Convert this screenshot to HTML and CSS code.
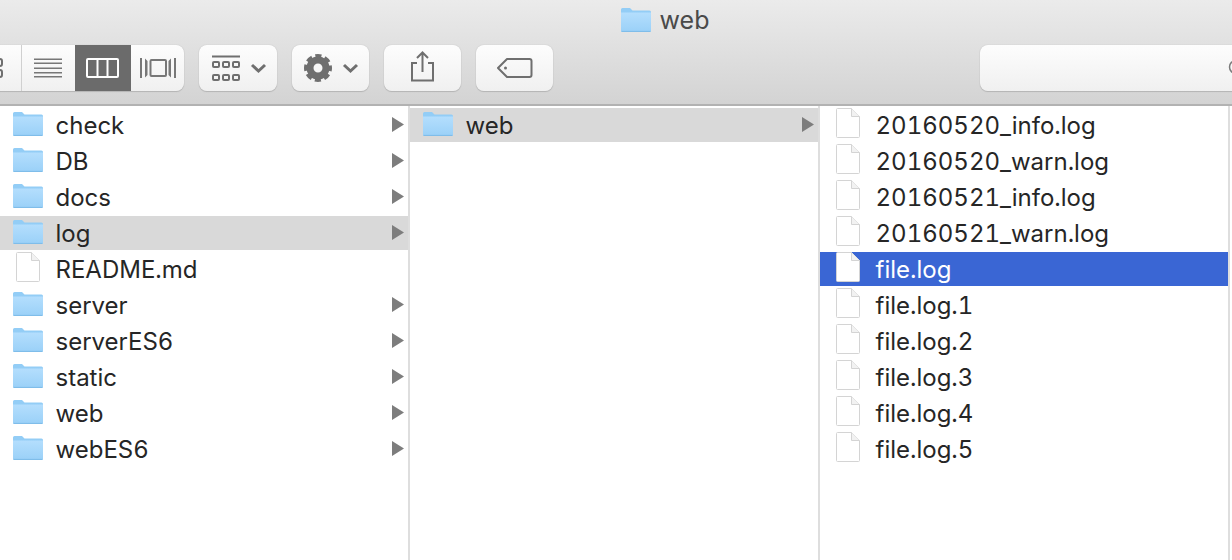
FILE: index.html
```html
<html>

<head>
  <title>web</title>
  <link rel="stylesheet" href="styles.css">
</head>

<body>
  <!-- Shared icons -->
  <svg class="sprite">
    <defs>
      <linearGradient id="folderFront" x1="0" y1="0" x2="0" y2="1">
        <stop offset="0" stop-color="#b4defd"/>
        <stop offset="1" stop-color="#9bd1f8"/>
      </linearGradient>
    </defs>
    <symbol id="folder" viewBox="0 0 30 24">
      <path d="M0 1.500Q0 0 1.500 0H9L11.500 2.500H28.500Q30 2.500 30 4V22.500Q30 24 28.500 24H1.500Q0 24 0 22.500Z" fill="#93cdf6"/>
      <path d="M0 4.500H30V22.500Q30 23.200 28.500 23.200H1.500Q0 23.200 0 22.500Z" fill="url(#folderFront)"/>
      <path d="M.5 23.400H29.500" stroke="#7dbbe8" stroke-width="1"/>
    </symbol>
    <symbol id="file" viewBox="0 0 24 30">
      <path d="M.5 1.500Q.5 .5 1.500 .5H15.500L23.500 8.500V28.500Q23.500 29.500 22.500 29.500H1.500Q.5 29.500 .5 28.500Z" fill="#fff" stroke="#d4d4d4"/>
      <path d="M15.500 .5V8.500H23.500" fill="#f2f2f2" stroke="#d4d4d4"/>
    </symbol>
    <symbol id="arrow" viewBox="0 0 12 15">
      <path d="M0 0L12 7.500L0 15Z" fill="#7d7d7d"/>
    </symbol>
  </svg>

  <!-- Title bar and toolbar -->
  <div class="toolbar">
    <div class="title">
      <svg class="folder"><use href="#folder"/></svg>
      <span>web</span>
    </div>
    <div class="tools">
      <div class="group">
        <div class="btn view first">
          <svg width="51" height="46" viewBox="0 0 51 46" fill="none" stroke="#6f6f6f" stroke-width="2">
            <rect x="25" y="14" width="7" height="7" rx="2"/>
            <rect x="25" y="25" width="7" height="7" rx="2"/>
          </svg>
        </div>
        <div class="btn view">
          <svg width="53" height="46" viewBox="0 0 53 46" fill="#777">
            <rect x="12" y="13.500" width="28" height="1.500"/>
            <rect x="12" y="17.500" width="28" height="1.500"/>
            <rect x="12" y="22.500" width="28" height="1.500"/>
            <rect x="12" y="27" width="28" height="1.500"/>
            <rect x="12" y="31" width="28" height="1.500"/>
          </svg>
        </div>
        <div class="btn view active">
          <svg width="56" height="46" viewBox="0 0 56 46" fill="none" stroke="#fff" stroke-width="2">
            <rect x="12" y="14" width="31" height="18" rx="1"/>
            <path d="M22.500 14V32M32.500 14V32"/>
          </svg>
        </div>
        <div class="btn view">
          <svg width="53" height="46" viewBox="0 0 53 46" fill="none" stroke="#777" stroke-width="2">
            <rect x="19.500" y="15" width="15.500" height="16" rx="1"/>
            <path d="M10 13V33M44 13V33"/>
            <path d="M14 13.500V32.500L16.500 30V16ZM40 13.500V32.500L37.500 30V16Z" fill="#777" stroke="none"/>
          </svg>
        </div>
      </div>

      <div class="btn">
        <svg width="78" height="46" viewBox="0 0 78 46" fill="none" stroke="#6f6f6f" stroke-width="2">
          <path d="M13 11.500H41"/>
          <rect x="14" y="17" width="6" height="5" rx="1"/>
          <rect x="24" y="17" width="6" height="5" rx="1"/>
          <rect x="34" y="17" width="6" height="5" rx="1"/>
          <rect x="14" y="30" width="6" height="5" rx="1"/>
          <rect x="24" y="30" width="6" height="5" rx="1"/>
          <rect x="34" y="30" width="6" height="5" rx="1"/>
          <path d="M53 20L59.500 26L66 20" stroke-width="3"/>
        </svg>
      </div>

      <div class="btn">
        <svg width="77" height="46" viewBox="0 0 77 46" fill="none">
          <circle cx="26" cy="23" r="8" stroke="#6f6f6f" stroke-width="7"/>
          <circle cx="26" cy="23" r="12" stroke="#6f6f6f" stroke-width="4" stroke-dasharray="6 3.425" stroke-dashoffset="3"/>
          <path d="M52 20L58.500 26L65 20" stroke="#6f6f6f" stroke-width="3"/>
        </svg>
      </div>

      <div class="btn">
        <svg width="77" height="46" viewBox="0 0 77 46" fill="none" stroke="#6f6f6f" stroke-width="2">
          <path d="M33 18H28V35.500H49V18H44"/>
          <path d="M38.500 27V8M33 13L38.500 7.500L44 13"/>
        </svg>
      </div>

      <div class="btn">
        <svg width="77" height="46" viewBox="0 0 77 46" fill="none" stroke="#6f6f6f" stroke-width="2">
          <path d="M31 14H53.500Q55.500 14 55.500 16V30Q55.500 32 53.500 32H31L22 23Z" stroke-linejoin="round"/>
          <circle cx="29.500" cy="23" r="1.500" fill="#6f6f6f" stroke="none"/>
        </svg>
      </div>

      <div class="btn search">
        <svg width="20" height="24" viewBox="0 0 20 24" fill="none" stroke="#7a7a7a" stroke-width="1.500">
          <circle cx="8" cy="11" r="6.500"/>
        </svg>
      </div>
    </div>
  </div>

  <!-- Columns -->
  <div class="columns">
    <div class="col">
      <div class="row"><svg class="folder"><use href="#folder"/></svg><span class="name">check</span><svg class="arrow"><use href="#arrow"/></svg></div>
      <div class="row"><svg class="folder"><use href="#folder"/></svg><span class="name">DB</span><svg class="arrow"><use href="#arrow"/></svg></div>
      <div class="row"><svg class="folder"><use href="#folder"/></svg><span class="name">docs</span><svg class="arrow"><use href="#arrow"/></svg></div>
      <div class="row picked"><svg class="folder"><use href="#folder"/></svg><span class="name">log</span><svg class="arrow"><use href="#arrow"/></svg></div>
      <div class="row"><svg class="file"><use href="#file"/></svg><span class="name">README.md</span></div>
      <div class="row"><svg class="folder"><use href="#folder"/></svg><span class="name">server</span><svg class="arrow"><use href="#arrow"/></svg></div>
      <div class="row"><svg class="folder"><use href="#folder"/></svg><span class="name">serverES6</span><svg class="arrow"><use href="#arrow"/></svg></div>
      <div class="row"><svg class="folder"><use href="#folder"/></svg><span class="name">static</span><svg class="arrow"><use href="#arrow"/></svg></div>
      <div class="row"><svg class="folder"><use href="#folder"/></svg><span class="name">web</span><svg class="arrow"><use href="#arrow"/></svg></div>
      <div class="row"><svg class="folder"><use href="#folder"/></svg><span class="name">webES6</span><svg class="arrow"><use href="#arrow"/></svg></div>
    </div>

    <div class="col">
      <div class="row picked"><svg class="folder"><use href="#folder"/></svg><span class="name">web</span><svg class="arrow"><use href="#arrow"/></svg></div>
    </div>

    <div class="col files">
      <div class="row"><svg class="file"><use href="#file"/></svg><span class="name">20160520_info.log</span></div>
      <div class="row"><svg class="file"><use href="#file"/></svg><span class="name">20160520_warn.log</span></div>
      <div class="row"><svg class="file"><use href="#file"/></svg><span class="name">20160521_info.log</span></div>
      <div class="row"><svg class="file"><use href="#file"/></svg><span class="name">20160521_warn.log</span></div>
      <div class="row selected"><svg class="file"><use href="#file"/></svg><span class="name">file.log</span></div>
      <div class="row"><svg class="file"><use href="#file"/></svg><span class="name">file.log.1</span></div>
      <div class="row"><svg class="file"><use href="#file"/></svg><span class="name">file.log.2</span></div>
      <div class="row"><svg class="file"><use href="#file"/></svg><span class="name">file.log.3</span></div>
      <div class="row"><svg class="file"><use href="#file"/></svg><span class="name">file.log.4</span></div>
      <div class="row"><svg class="file"><use href="#file"/></svg><span class="name">file.log.5</span></div>
    </div>
  </div>
</body>

</html>
```

FILE: styles.css
```css
body {
  margin: 0;
  height: 560px;
  overflow: hidden;
  background-color: white;
  font-family: Inter, "Liberation Sans", Arial, sans-serif;
  font-variant-numeric: tabular-nums;
  color: #262626;
}

/* Not display: none, the folder gradient stops working then */
.sprite {
  display: block;
  width: 0;
  height: 0;
}

/* Title bar and toolbar */
.toolbar {
  height: 104px;
  overflow: hidden;
  background: linear-gradient(#ebebeb, #d3d3d3);
  border-bottom: 2px solid #b2b2b2;
}

.title {
  height: 45px;
  display: flex;
  justify-content: center;
  align-items: center;
  gap: 9px;
  padding-left: 98px;
  padding-bottom: 6px;
  box-sizing: border-box;
  font-size: 25px;
  color: #4a4a4a;
}

.tools {
  display: flex;
  gap: 15px;
  margin-left: -30px;
}

.group {
  display: flex;
  border-radius: 8px;
  overflow: hidden;
  box-shadow: 0 0 1px #a8a8a8, 0 1px 1px #b5b5b5;
  flex-shrink: 0;
}

.btn {
  height: 46px;
  border-radius: 8px;
  background: linear-gradient(#fdfdfd, #f0f0f0);
  box-shadow: 0 0 1px #a8a8a8, 0 1px 1px #b5b5b5;
  flex-shrink: 0;
}

.btn svg {
  display: block;
}

.view {
  border-radius: 0;
  box-shadow: none;
}

.first {
  border-right: 1px solid #d0d0d0;
  width: 51px;
}

.active {
  background: #6b6b6b;
}

.search {
  width: 270px;
  margin-left: 412px;
  display: flex;
  justify-content: flex-end;
  align-items: center;
}

.search svg {
  margin-right: 2px;
}

/* Columns */
.columns {
  display: flex;
  height: 454px;
}

.col {
  width: 408px;
  flex-shrink: 0;
  padding-top: 2px;
  border-right: 2px solid #dedede;
  display: flex;
  flex-direction: column;
  gap: 2px;
}

.row {
  height: 34px;
  display: flex;
  align-items: center;
  font-size: 24px;
  flex-shrink: 0;
}

.folder {
  width: 30px;
  height: 24px;
  flex-shrink: 0;
}

.row .folder {
  margin-left: 13px;
  margin-right: 12.5px;
  margin-bottom: 2px;
}

.file {
  width: 24px;
  height: 30px;
  flex-shrink: 0;
  margin-left: 16px;
  margin-right: 15.5px;
  margin-bottom: 4px;
}

.name {
  flex: 1;
}

.arrow {
  width: 12px;
  height: 15px;
  margin-right: 4px;
  margin-top: -2px;
}

.picked {
  background-color: #d9d9d9;
}

.selected {
  background-color: #3a66d4;
  color: white;
}
```
